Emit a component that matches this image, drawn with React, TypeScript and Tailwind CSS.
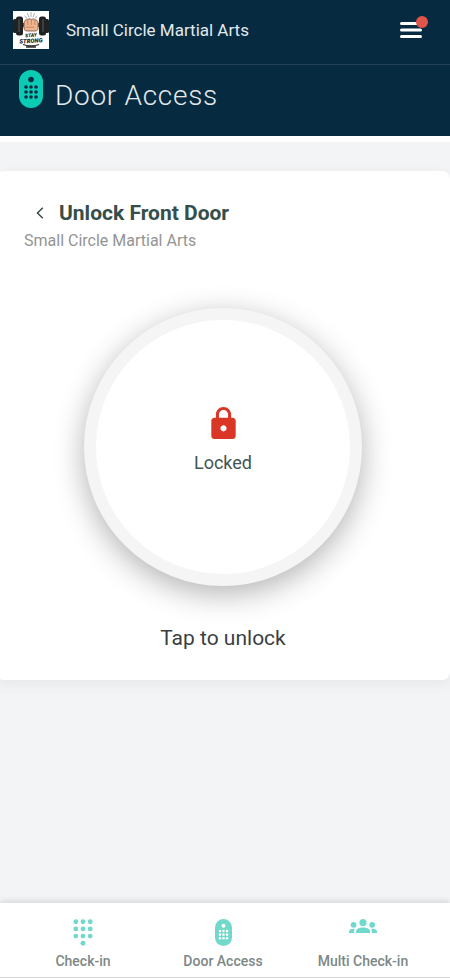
import { useState } from "react";

const TABS = ["Check-in", "Door Access", "Multi Check-in"];

const KEYPAD = [
  [4, 2], [12, 2], [20, 2],
  [4, 10], [12, 10], [20, 10],
  [4, 18], [12, 18], [20, 18],
  [12, 26],
];

function RemoteIcon({ className, dots }: { className: string; dots: string }) {
  return (
    <svg viewBox="0 0 24 38" className={className} aria-hidden="true">
      <rect width="24" height="38" rx="12" fill="currentColor" />
      <g fill={dots}>
        <circle cx="12" cy="9.5" r="2.8" />
        {[17, 22, 27].map((y) =>
          [7, 12, 17].map((x) => <circle key={`${x}-${y}`} cx={x} cy={y} r="1.8" />)
        )}
      </g>
    </svg>
  );
}

function KeypadIcon() {
  return (
    <svg viewBox="1 -1 22 30" className="h-[27px] w-5" fill="currentColor" aria-hidden="true">
      {KEYPAD.map(([x, y]) => <circle key={`${x}-${y}`} cx={x} cy={y} r="2.7" />)}
    </svg>
  );
}

function GroupIcon() {
  return (
    <svg viewBox="0 0 28 14" className="h-[14px] w-7" fill="currentColor" aria-hidden="true">
      <circle cx="14" cy="3.6" r="3.6" />
      <circle cx="4.6" cy="5.8" r="2.9" />
      <circle cx="23.2" cy="5.8" r="2.9" />
      <path d="M7 14v-1.6C7 9.8 10.2 8.4 14 8.4s7 1.4 7 4V14z" />
      <path d="M0 14v-1.4c0-1.8 2-2.8 4.4-2.8.5 0 1 0 1.4.1-.5.7-.7 1.5-.7 2.5V14z" />
      <path d="M28 14v-1.4c0-1.8-2-2.8-4.4-2.8-.5 0-1 0-1.4.1.5.7.7 1.5.7 2.5V14z" />
    </svg>
  );
}

function GymLogo() {
  return (
    <svg viewBox="0 0 36 38" className="h-[38px] w-9 shrink-0" role="img" aria-label="Stay Strong">
      <rect width="36" height="38" fill="#fff" />
      <g stroke="#8a8a8a" strokeWidth=".7" strokeLinecap="round">
        <path d="M12 5l2 2.500M14.500 2.500l1.400 3.500M18 1.500v4M21.500 2.500L20.200 6M24 5l-2 2.500" />
      </g>
      <rect x="7" y="12" width="22" height="4" fill="#555" />
      <g fill="#202222">
        <rect x="0" y="8" width="4" height="14" rx="1.5" />
        <rect x="3" y="5.500" width="7" height="19" rx="2.5" />
        <rect x="26" y="5.500" width="7" height="19" rx="2.5" />
        <rect x="32" y="8" width="4" height="14" rx="1.5" />
      </g>
      <path d="M6 8v13M30 8v13" stroke="#6d7070" strokeWidth=".8" />
      <path
        d="M11 12c0-2.200 1.600-3.500 3.400-3.300 1-1.100 2.800-1.100 3.800-.2 1.100-.8 2.700-.7 3.500.3 2-.1 3.400 1.300 3.400 3.300v5c0 1.700-1.300 2.900-3 2.900h-8c-1.900 0-3.100-1.200-3.100-3z"
        fill="#efb58f" stroke="#5e3826" strokeWidth=".7"
      />
      <path d="M14.800 9.500v4.500M18.300 9v5M21.800 9.500v4.500M12.800 16.200h8.500" stroke="#a9694b" strokeWidth=".6" fill="none" />
      <g fill="#222" fontFamily="Roboto, sans-serif" fontWeight="900" fontStyle="italic" textAnchor="middle">
        <text x="18" y="26" fontSize="5" transform="rotate(-6 18 25)">STAY</text>
        <text x="18" y="32" fontSize="6" transform="rotate(-3 18 31)">STRONG</text>
      </g>
      <path d="M10 33.500c4 1.800 12 1.800 16 0M13 36h10" stroke="#333" strokeWidth="1.300" fill="none" />
    </svg>
  );
}

function TabIcon({ tab }: { tab: string }) {
  if (tab === "Check-in") return <KeypadIcon />;
  if (tab === "Door Access") return <RemoteIcon className="h-[27px] w-[17px]" dots="#fff" />;
  return <GroupIcon />;
}

export default function App() {
  const [locked, setLocked] = useState(true);
  const [activeTab, setActiveTab] = useState("Door Access");

  return (
    <div className="flex min-h-screen flex-col overflow-x-hidden bg-[#f3f4f6] font-['Roboto',sans-serif]">

      {/* Header */}
      <header className="border-b-[6px] border-white bg-[#062a40]">
        <div className="flex h-[65px] items-center border-b border-[#24415a] pb-1 pl-[13px] pr-[22px]">
          <GymLogo />
          <span className="ml-[17px] text-[17px] leading-7 text-[#e3e8eb]">Small Circle Martial Arts</span>
          <button type="button" aria-label="Menu" className="relative ml-auto flex h-7 w-7 items-center">
            <svg viewBox="0 0 22 16" className="h-4 w-[22px]" stroke="#fff" strokeWidth="3" strokeLinecap="round" aria-hidden="true">
              <path d="M1.500 1.500h19M1.500 8h19M1.500 14.500h19" />
            </svg>
            <span className="absolute right-0 top-0 h-3 w-3 rounded-full bg-[#e15449]" />
          </button>
        </div>
        <div className="flex h-[71px] items-start pl-[19px] pt-[5px]">
          <RemoteIcon className="h-[38px] w-6 text-[#0bcbb5]" dots="#062a40" />
          <h1 className="ml-3 pt-2 text-[28px] font-light leading-9 tracking-wide text-[#e3e8eb]">Door Access</h1>
        </div>
      </header>

      {/* Door card */}
      <main className="flex-1 pt-[29px]">
        <section className="-ml-1 flex flex-col rounded-lg bg-white px-7 py-7 shadow-[0_4px_14px_rgba(0,0,0,0.06)]">
          <div className="flex items-center">
            <button type="button" aria-label="Back" className="flex h-7 w-[35px] items-center pl-3 text-[#3a4b48]">
              <svg viewBox="0 0 8 12" className="h-3 w-2" fill="none" stroke="currentColor" strokeWidth="1.5" aria-hidden="true">
                <path d="M6.800 .8L1.500 6l5.300 5.200" />
              </svg>
            </button>
            <h2 className="text-[21px] font-bold leading-7 text-[#364e49]">Unlock Front Door</h2>
          </div>
          <p className="text-base leading-7 text-[#949494]">Small Circle Martial Arts</p>

          <div className="mt-[53px] flex flex-col items-center">
            <button
              type="button"
              aria-pressed={!locked}
              aria-describedby="unlock-hint"
              onClick={() => setLocked(!locked)}
              className="flex h-[278px] w-[278px] flex-col items-center justify-center rounded-full border-[12px] border-[#f5f5f5] bg-white pb-2.5 shadow-[0_8px_30px_rgba(0,0,0,0.3)]"
            >
              <svg viewBox="4 1 16 21" className={locked ? "h-8 w-[25px] text-[#d93626]" : "h-8 w-[25px] text-[#0bcbb5]"} fill="currentColor" aria-hidden="true">
                <path d="M18 8h-1V6c0-2.760-2.240-5-5-5S7 3.240 7 6v2H6c-1.100 0-2 .9-2 2v10c0 1.100.9 2 2 2h12c1.100 0 2-.9 2-2V10c0-1.100-.9-2-2-2zm-6 9c-1.100 0-2-.9-2-2s.9-2 2-2 2 .9 2 2-.9 2-2 2zM9 8V6c0-1.710 1.290-3.100 3-3.100s3 1.390 3 3.100v2z" />
              </svg>
              <span className="mt-2.5 text-lg leading-7 text-[#445553]">{locked ? "Locked" : "Unlocked"}</span>
            </button>
            <p id="unlock-hint" className="mt-[38px] text-[21px] leading-7 text-[#3b3f3f]">
              {locked ? "Tap to unlock" : "Tap to lock"}
            </p>
          </div>
        </section>
      </main>

      {/* Tab bar */}
      <nav className="grid grid-cols-3 border-b border-[#d5d5d5] bg-white pl-[13px] pr-[17px] shadow-[0_-2px_6px_rgba(0,0,0,0.12)]">
        {TABS.map((tab) => (
          <button
            key={tab}
            type="button"
            aria-current={activeTab === tab ? "page" : undefined}
            onClick={() => setActiveTab(tab)}
            className="flex h-[74px] flex-col items-center pt-4"
          >
            <span className="flex h-8 items-start text-[#71d9cc]">
              <TabIcon tab={tab} />
            </span>
            <span className="text-sm font-medium text-[#7d8886]">{tab}</span>
          </button>
        ))}
      </nav>
    </div>
  );
}
